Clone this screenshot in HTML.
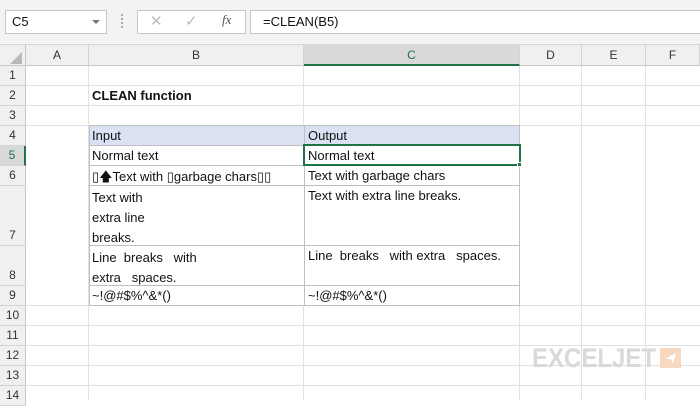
<!DOCTYPE html><html><head><style>
body{margin:0;width:700px;height:400px;overflow:hidden;background:#fff;font-family:"Liberation Sans",Calibri,sans-serif;position:relative}
div{position:absolute;box-sizing:border-box}
.t{font-size:13px;color:#111;white-space:pre}
.rh{left:0;width:26px;text-align:center;font-size:12px;color:#333;background:#f0f0f0;border-bottom:1px solid #d4d4d4;border-right:1px solid #c8c8c8}
.ch{top:45px;height:21px;text-align:center;font-size:12px;color:#333;background:#f0f0f0;border-right:1px solid #d4d4d4;border-bottom:1px solid #c8c8c8;line-height:20px}
.hl{left:26px;width:674px;height:1px;background:#e1e1e1}
.vl{top:66px;height:334px;width:1px;background:#e1e1e1}
</style></head><body>
<div style="left:0;top:0;width:700px;height:45px;background:#f3f3f3;border-bottom:1px solid #d4d4d4"></div>
<div style="left:5px;top:10px;width:102px;height:24px;background:#fff;border:1px solid #c6c6c6"></div>
<div class="t" style="left:12px;top:14px;font-size:13px">C5</div>
<div style="left:92px;top:20px;width:0;height:0;border-left:4px solid transparent;border-right:4px solid transparent;border-top:4px solid #777"></div>
<div style="left:121px;top:14px;width:2px;height:14px;border-left:2px dotted #aaa"></div>
<div style="left:137px;top:10px;width:109px;height:24px;background:#fff;border:1px solid #c6c6c6"></div>
<div class="t" style="left:150px;top:12px;font-size:15px;color:#bbb">✕</div>
<div class="t" style="left:185px;top:12px;font-size:15px;color:#bbb">✓</div>
<div class="t" style="left:222px;top:12px;font-size:13px;font-style:italic;font-family:'Liberation Serif',serif;color:#555">fx</div>
<div style="left:250px;top:10px;width:460px;height:24px;background:#fff;border:1px solid #c6c6c6"></div>
<div class="t" style="left:263px;top:14px">=CLEAN(B5)</div>

<div style="left:0;top:45px;width:26px;height:21px;background:#f0f0f0;border-right:1px solid #c8c8c8;border-bottom:1px solid #c8c8c8"></div>
<div style="left:10px;top:52px;width:0;height:0;border-left:12px solid transparent;border-bottom:12px solid #b8b8b8"></div>
<div class="ch" style="left:26px;width:63px">A</div>
<div class="ch" style="left:89px;width:215px">B</div>
<div class="ch" style="left:304px;width:216px;background:#d9d9d9;border-bottom:2px solid #217346;color:#217346">C</div>
<div class="ch" style="left:520px;width:62px">D</div>
<div class="ch" style="left:582px;width:64px">E</div>
<div class="ch" style="left:646px;width:54px">F</div>

<div class="rh" style="top:66px;height:20px;line-height:19px">1</div>
<div class="rh" style="top:86px;height:20px;line-height:19px">2</div>
<div class="rh" style="top:106px;height:20px;line-height:19px">3</div>
<div class="rh" style="top:126px;height:20px;line-height:19px">4</div>
<div class="rh" style="top:146px;height:20px;line-height:19px;background:#d9d9d9;color:#217346;border-right:2px solid #217346">5</div>
<div class="rh" style="top:166px;height:20px;line-height:19px">6</div>
<div class="rh" style="top:186px;height:60px;line-height:99px">7</div>
<div class="rh" style="top:246px;height:40px;line-height:59px">8</div>
<div class="rh" style="top:286px;height:20px;line-height:19px">9</div>
<div class="rh" style="top:306px;height:20px;line-height:19px">10</div>
<div class="rh" style="top:326px;height:20px;line-height:19px">11</div>
<div class="rh" style="top:346px;height:20px;line-height:19px">12</div>
<div class="rh" style="top:366px;height:20px;line-height:19px">13</div>
<div class="rh" style="top:386px;height:20px;line-height:19px">14</div>

<div class="hl" style="top:85px"></div><div class="hl" style="top:105px"></div><div class="hl" style="top:125px"></div>
<div class="hl" style="top:305px"></div><div class="hl" style="top:325px"></div><div class="hl" style="top:345px"></div><div class="hl" style="top:365px"></div><div class="hl" style="top:385px"></div>
<div class="vl" style="left:88px"></div><div class="vl" style="left:581px"></div><div class="vl" style="left:645px"></div>
<div class="vl" style="left:303px;top:66px;height:59px"></div><div class="vl" style="left:519px;top:66px;height:59px"></div>
<div class="vl" style="left:303px;top:306px;height:94px"></div><div class="vl" style="left:519px;top:306px;height:94px"></div>

<div class="t" style="left:92px;top:88px;font-weight:bold">CLEAN function</div>

<div style="left:89px;top:125px;width:431px;height:20px;background:#d9e1f2"></div>
<div style="left:89px;top:125px;width:431px;height:181px;border:1px solid #bfbfbf"></div>
<div style="left:89px;top:145px;width:431px;height:1px;background:#bfbfbf"></div>
<div style="left:89px;top:165px;width:431px;height:1px;background:#bfbfbf"></div>
<div style="left:89px;top:185px;width:431px;height:1px;background:#bfbfbf"></div>
<div style="left:89px;top:245px;width:431px;height:1px;background:#bfbfbf"></div>
<div style="left:89px;top:285px;width:431px;height:1px;background:#bfbfbf"></div>
<div style="left:304px;top:125px;width:1px;height:181px;background:#bfbfbf"></div>

<div class="t" style="left:92px;top:128px">Input</div>
<div class="t" style="left:308px;top:128px">Output</div>
<div class="t" style="left:92px;top:148px">Normal text</div>
<div class="t" style="left:308px;top:148px">Normal text</div>
<div class="t" style="left:92px;top:168px">▯🡅Text with ▯garbage chars▯▯</div>
<div class="t" style="left:308px;top:168px">Text with garbage chars</div>
<div class="t" style="left:92px;top:188px;line-height:20px">Text with
extra line
breaks.</div>
<div class="t" style="left:308px;top:188px">Text with extra line breaks.</div>
<div class="t" style="left:92px;top:248px;line-height:20px">Line  breaks   with
extra   spaces.</div>
<div class="t" style="left:308px;top:248px">Line  breaks   with extra   spaces.</div>
<div class="t" style="left:92px;top:288px">~!@#$%^&amp;*()</div>
<div class="t" style="left:308px;top:288px">~!@#$%^&amp;*()</div>

<div style="left:303px;top:144px;width:218px;height:22px;border:2px solid #217346"></div>
<div style="left:517px;top:162px;width:5px;height:5px;background:#217346;border:1px solid #fff"></div>

<svg style="position:absolute;left:530px;top:340px" width="160" height="32">
<text x="2" y="27" font-family="Liberation Sans,sans-serif" font-weight="bold" font-size="27" fill="#d9d9d9" textLength="124" lengthAdjust="spacingAndGlyphs">EXCELJET</text>
<rect x="130" y="8" width="21" height="20" fill="#f8d9c0"/>
<path d="M135 19 L146 13 L143 24 L141 19 Z" fill="#fff"/>
</svg>
</body></html>
